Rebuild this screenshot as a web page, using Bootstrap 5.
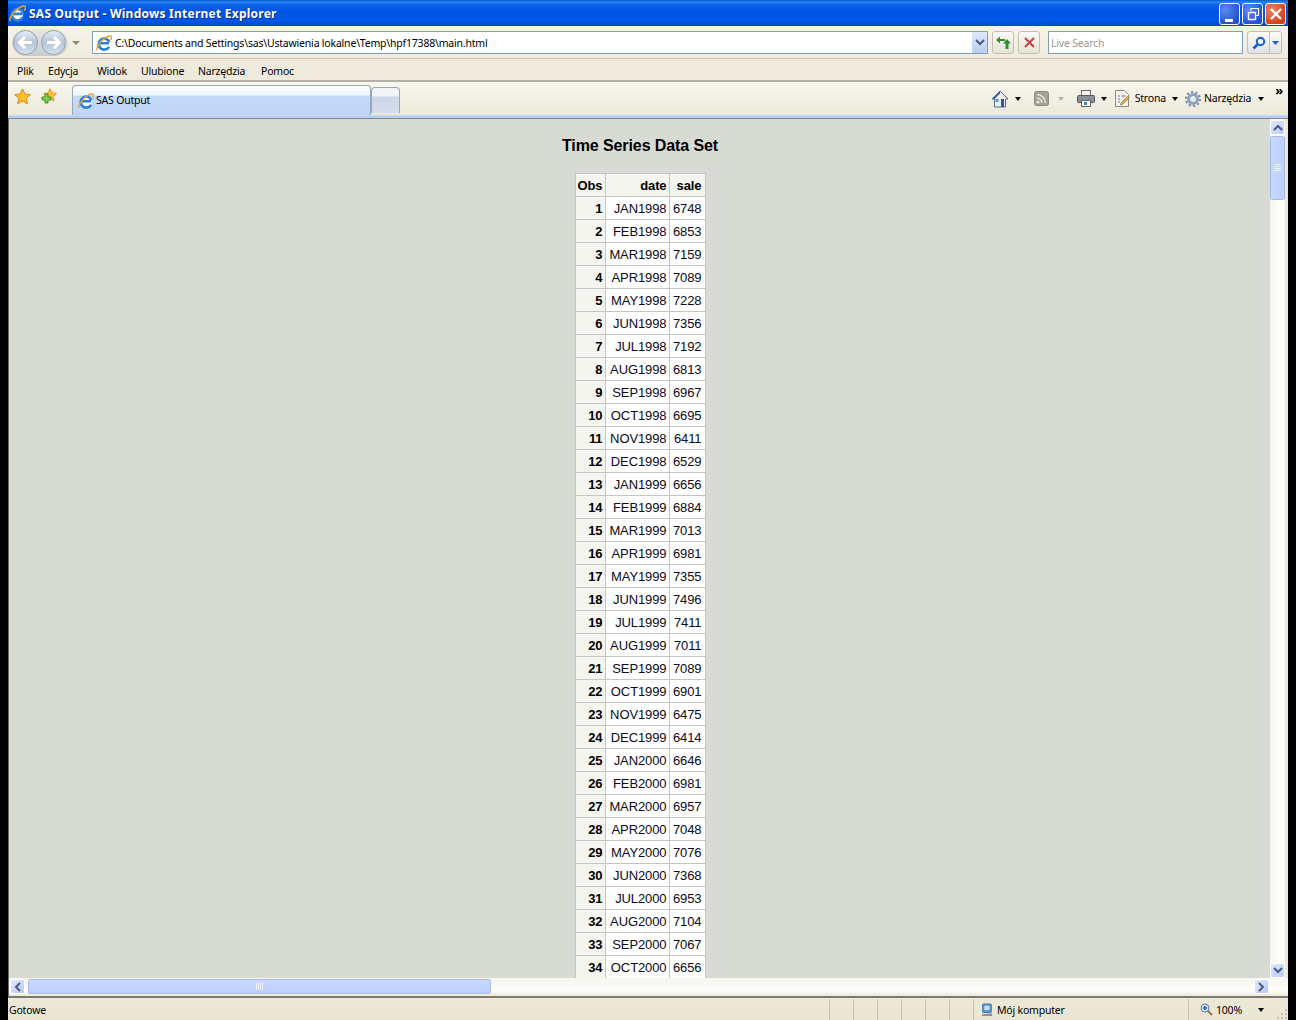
<!DOCTYPE html>
<html lang="pl">
<head>
<meta charset="utf-8">
<title>SAS Output - Windows Internet Explorer</title>
<link href="https://cdn.jsdelivr.net/npm/bootstrap@5.3.0/dist/css/bootstrap.min.css" rel="stylesheet">
<style>
html,body{height:1020px;overflow:hidden;background:#000;}
body{font-family:"Noto Sans","DejaVu Sans",sans-serif;font-size:10.5px;letter-spacing:-.2px;color:#000;}
.flex-none{flex:none;}
.ie-win{width:1280px;height:1020px;margin:0 8px;overflow:hidden;}
.ie-title{height:26px;flex:none;background:linear-gradient(#0a55d8 0,#2a86f6 2px,#0a62ea 5px,#0054e3 12px,#0058e8 20px,#0048d0 26px);padding:1px 2px 0 1px;color:#fff;}
.ie-title-text{font-weight:700;font-size:12px;letter-spacing:.24px;margin-left:3px;text-shadow:1px 1px 0 #0a2a8c;}
.ie-winbtn{width:21px;height:22px;border:1px solid #fff;border-radius:3px;background:radial-gradient(circle at 30% 30%,#5b8cf0,#2250cf 75%);margin-left:2px;}
.ie-winbtn.ie-close{background:radial-gradient(circle at 30% 30%,#ec8560,#d2401a 75%);}
.ie-addr{height:33px;flex:none;background:linear-gradient(#f6f3e8,#efebdc);border-bottom:1px solid #cbc7b6;padding:1px 6px 0 4px;}
.ie-navpill{width:56px;height:27px;border-radius:14px;background:linear-gradient(#e8e8e8,#c8ccd0);}
.ie-field{height:23px;border:1px solid #7f9db9;background:#fff;}
.ie-urlbox{width:896px;margin-left:11px;padding-left:3px;}
.ie-urlicon{flex:none;margin-right:3px;}
.ie-lower{padding-top:2px;}
.ie-combo{width:16px;height:21px;background:linear-gradient(#dfe8fc,#b9cdf6);border-radius:2px;border-left:1px solid #fff;}
.ie-sqbtn{width:22px;height:23px;border:1px solid #c4c0ae;border-radius:3px;background:linear-gradient(#fbfaf5,#e6e3d6);margin-left:4px;}
.ie-search{width:195px;margin-left:8px;padding-left:2px;color:#9a9a90;}
.ie-sbtn{width:35px;height:23px;margin-left:4px;border:1px solid #c4c0ae;border-radius:3px;background:linear-gradient(#fbfaf5,#dfe2e6);}
.ie-sbtn-a{width:22px;border-right:1px solid #c4c0ae;height:100%;}
.ie-menu{height:23px;flex:none;background:#efebdc;border-bottom:2px solid #b4b2a6;padding:4px 0 0 9px;}
.ie-mi31{width:31px;}.ie-mi49{width:49px;}.ie-mi44{width:44px;}.ie-mi57{width:57px;}.ie-mi63{width:63px;}
.ie-tabs{height:33px;flex:none;background:linear-gradient(#f8f6ee,#ece9da);padding-left:6px;}
.ie-stars{gap:9px;padding-bottom:4px;}
.ie-tab{width:299px;height:30px;margin-left:15px;margin-top:3px;border:1px solid #9aa7bb;border-bottom:0;border-radius:4px 4px 0 0;background:linear-gradient(#fcfdff 0,#eff5fe 9px,#c4daf9 10px,#bfd5f7 100%);padding:0 0 0 5px;}
.ie-newtab{width:29px;height:26px;margin-top:5px;border:1px solid #9aa7bb;border-bottom:0;border-radius:4px 4px 0 0;background:linear-gradient(#f2f4f8 0,#f2f4f8 8px,#cdd6ea 9px,#d6ddee 100%);}
.ie-tools{margin-left:auto;padding-right:5px;}
.ie-caret{width:0;height:0;border:3px solid transparent;border-top:4px solid #000;border-bottom:0;display:inline-block;flex:none;}
.ie-caret.ie-off{border-top-color:#b8b6aa;}
.ie-g2{margin-left:2px;}.ie-g3{margin-left:3px;}.ie-g4{margin-left:4px;}.ie-g5{margin-left:5px;}.ie-g6{margin-left:6px;}.ie-g7{margin-left:7px;}.ie-g8{margin-left:8px;}.ie-g9{margin-left:9px;}.ie-g11{margin-left:11px;}.ie-g13{margin-left:13px;}
.ie-more{font-size:13px;line-height:10px;margin-top:3px;}
.ie-blueline{height:3px;flex:none;background:linear-gradient(#c4d8f8,#b4c8ee);}
.ie-main{flex:1;min-height:0;border-top:1px solid #8c8a80;border-left:1px solid #6e6c64;}
.ie-upper{min-height:0;}
.ie-vbar{width:18px;flex:none;background:linear-gradient(90deg,#f6f5ee,#fdfdfa 60%);border-right:3px solid #ece9d8;padding-top:1px;}
.ie-page{background:#d8dbd4;min-height:0;overflow:hidden;padding-left:1px;}
.ie-arrow{width:15px;height:15px;flex:none;border:1px solid #fff;border-radius:2px;background:linear-gradient(135deg,#e0e8fd,#b8cbf8);}
.ie-thumbv{width:15px;height:64px;margin-top:1px;border:1px solid #fff;outline:1px solid #a8bcea;outline-offset:-1px;border-radius:2px;background:linear-gradient(90deg,#c9d8fc,#bcd0fa);}
.ie-hbar{height:18px;flex:none;background:linear-gradient(#f6f5ee,#fdfdfa 70%,#ece9d8);padding:1px 4px 0 1px;}
.ie-thumbh{width:463px;height:15px;margin-left:3px;border:1px solid #fff;outline:1px solid #a8bcea;outline-offset:-1px;border-radius:2px;background:linear-gradient(#c9d8fc,#bcd0fa);}
.ie-corner{width:15px;flex:none;}
.ie-status{height:24px;flex:none;border-top:2px solid #7c7a70;background:linear-gradient(#ece9d8,#e9e6d4);padding-top:1px;}
.ie-status-msg{padding-left:1px;height:100%;line-height:23px;border-right:1px solid #c6c3b2;}
.ie-cell{height:100%;border-right:1px solid #c6c3b2;}
.ie-s1{width:24px;flex:none;}
.ie-s2{width:215px;flex:none;padding-left:7px;}
.ie-s3{width:87px;flex:none;padding-left:11px;padding-right:12px;}
.ie-grip{align-self:flex-end;flex:none;}
h1.ie-h{font-family:"Liberation Sans",Arial,sans-serif;font-size:16px;font-weight:700;letter-spacing:-.1px;line-height:18px;text-align:center;margin:18px 0 18px;color:#000;}
.ie-tbl{font-family:"Liberation Sans",Arial,sans-serif;font-size:13px;letter-spacing:-.1px;line-height:15px;border-collapse:collapse;table-layout:fixed;margin:0 auto;width:131px;color:#000;}
.ie-tbl th,.ie-tbl td{border:1px solid #c4c6c2;padding:4px 2px 3px 0;height:23px;text-align:right;font-weight:400;background:#fff;color:#0a0a20;white-space:nowrap;}
.ie-tbl th{font-weight:700;background:#f4f5ef;color:#000;}
.ie-tbl tr>:last-child{padding-right:3px;}
.ie-c1{width:30px;}.ie-c2{width:64px;}.ie-c3{width:36px;}
</style>
</head>
<body>
<svg width="0" height="0" class="d-block" aria-hidden="true">
<defs>
<symbol id="ie" viewBox="0 0 16 16">
<circle cx="8" cy="8.500" r="5.500" fill="#fff"/>
<path d="M3.500 8.300h9.500M13 11.800A5.500 5.500 0 1 1 13.300 7" fill="none" stroke="#2a7fdc" stroke-width="2.600"/>
<path d="M1.300 15.200C-.6 12.500 6 3 13.500 1c2.600-.7 2.600 2 1 4.200" fill="none" stroke="#eca32a" stroke-width="1.400"/>
</symbol>
<symbol id="star" viewBox="0 0 16 16">
<path d="M8 .8l2.200 4.900 5.200.5-3.900 3.500 1.200 5.200L8 12.200l-4.700 2.700 1.200-5.200L.6 6.200l5.200-.5z" fill="#fbc030" stroke="#d88a10" stroke-width=".9"/>
</symbol>
</defs>
</svg>
<div class="ie-win d-flex flex-column">

  <div class="ie-title d-flex align-items-center">
    <svg width="17" height="17"><use href="#ie"/></svg>
    <span class="ie-title-text">SAS Output - Windows Internet Explorer</span>
    <span class="ms-auto d-flex align-items-center">
      <span class="ie-winbtn d-flex align-items-end justify-content-center"><svg width="12" height="12"><rect x="1" y="7" width="8" height="3" fill="#fff"/></svg></span>
      <span class="ie-winbtn d-flex align-items-center justify-content-center"><svg width="16" height="16" fill="none" stroke="#fff"><rect x="3.500" y="6.500" width="7" height="7" stroke-width="1.400"/><path d="M6 4.500V2.500h7.500v7H11" stroke-width="1.200"/></svg></span>
      <span class="ie-winbtn ie-close d-flex align-items-center justify-content-center"><svg width="14" height="14" stroke="#fff" stroke-width="2.400"><path d="M2 2l10 10M12 2L2 12"/></svg></span>
    </span>
  </div>

  <div class="ie-addr d-flex align-items-center">
    <span class="ie-navpill d-flex align-items-center">
      <svg width="56" height="27" viewBox="0 0 56 27">
        <defs><linearGradient id="gb" x1="0" y1="0" x2="0" y2="1"><stop offset="0" stop-color="#e6eef6"/><stop offset=".5" stop-color="#b4c6d8"/><stop offset="1" stop-color="#d6e2ee"/></linearGradient></defs>
        <circle cx="13.500" cy="13.500" r="12" fill="url(#gb)" stroke="#9aa0a8"/>
        <circle cx="41.500" cy="13.500" r="12" fill="url(#gb)" stroke="#9aa0a8"/>
        <path d="M20 13.500H8M13 8l-5.500 5.500L13 19" fill="none" stroke="#fff" stroke-width="3"/>
        <path d="M35 13.500h12M42 8l5.500 5.500L42 19" fill="none" stroke="#fff" stroke-width="3"/>
      </svg>
    </span>
    <svg class="ms-1" width="9" height="6"><path d="M0 1h8L4 5z" fill="#8a8a84"/></svg>
    <div class="ie-field ie-urlbox d-flex align-items-center">
      <svg class="ie-urlicon" width="16" height="16"><use href="#ie"/></svg>
      <span class="flex-grow-1 ie-lower">C:\Documents and Settings\sas\Ustawienia lokalne\Temp\hpf17388\main.html</span>
      <span class="ie-combo d-flex align-items-center justify-content-center"><svg width="10" height="7" fill="none" stroke="#4a5a80" stroke-width="2"><path d="M1 1l4 4 4-4"/></svg></span>
    </div>
    <span class="ie-sqbtn d-flex align-items-center justify-content-center"><svg width="17" height="15" viewBox="0 0 17 15" fill="#2f8f2f"><path d="M1 5l4-3.500V4h5v2H5v2.500z"/><path d="M12 4l4 4.500h-2.500V14h-3V8.500H8z"/></svg></span>
    <span class="ie-sqbtn d-flex align-items-center justify-content-center"><svg width="13" height="13" stroke="#c8474a" stroke-width="2.200"><path d="M2 2l9 9M11 2L2 11"/></svg></span>
    <div class="ie-field ie-search d-flex align-items-center"><span class="ie-lower">Live Search</span></div>
    <span class="ie-sbtn d-flex align-items-center">
      <span class="ie-sbtn-a d-flex align-items-center justify-content-center"><svg width="14" height="14" fill="none" stroke="#1a5fd0" stroke-width="2"><circle cx="8.500" cy="5.500" r="3.700"/><path d="M5.500 8.500L1.500 12.500" stroke-width="2.600"/></svg></span>
      <span class="flex-grow-1 d-flex justify-content-center"><svg width="7" height="4"><path d="M0 0h7L3.500 4z" fill="#1a5fd0"/></svg></span>
    </span>
  </div>

  <div class="ie-menu d-flex align-items-center">
    <span class="ie-mi31">Plik</span><span class="ie-mi49">Edycja</span><span class="ie-mi44">Widok</span><span class="ie-mi57">Ulubione</span><span class="ie-mi63">Narzędzia</span><span>Pomoc</span>
  </div>

  <div class="ie-tabs d-flex">
    <span class="ie-stars d-flex align-items-center">
      <svg width="17" height="17"><use href="#star"/></svg>
      <svg width="17" height="17" viewBox="0 0 17 17"><g transform="translate(3 0)"><svg width="14" height="14"><use href="#star"/></svg></g><path d="M5 6v3H2v3h3v3h3v-3h3V9H8V6z" fill="#7ed04a" stroke="#3a8a24" stroke-width=".9"/></svg>
    </span>
    <div class="ie-tab d-flex align-items-center">
      <svg class="flex-none" width="16" height="16"><use href="#ie"/></svg><span class="ie-g2">SAS Output</span>
    </div>
    <div class="ie-newtab"></div>
    <div class="ie-tools d-flex align-items-center">
      <svg width="18" height="18" viewBox="0 0 18 18"><path d="M9 1L1 9h2.500v8h11V9H17z" fill="#eef2f6" stroke="#5a6a80"/><path d="M9 1L1 9h2.500L9 3.500z" fill="#3a5ab0"/><rect x="4.500" y="9" width="3" height="3" fill="#5f90c8"/><rect x="10" y="9" width="3" height="8" fill="#2a5aa8"/></svg>
      <span class="ie-caret ie-g6"></span>
      <svg class="ie-g13" width="15" height="15" viewBox="0 0 15 15"><rect x=".5" y=".5" width="14" height="14" rx="2" fill="#a2a298" stroke="#8a8a80"/><circle cx="4" cy="11" r="1.500" fill="#e8e8e0"/><path d="M3 7a5 5 0 0 1 5 5M3 3.500A8.500 8.500 0 0 1 11.500 12" fill="none" stroke="#e8e8e0" stroke-width="1.500"/></svg>
      <span class="ie-caret ie-off ie-g9"></span>
      <svg class="ie-g13" width="18" height="17" viewBox="0 0 18 17"><rect x="4.500" y=".5" width="9" height="5" fill="#f6f6f6" stroke="#666"/><rect x=".5" y="5.500" width="17" height="7" rx="1" fill="#8a8e96" stroke="#55585e"/><rect x="4.500" y="10.500" width="9" height="6" fill="#fff" stroke="#666"/><rect x="7" y="12" width="3" height="3" fill="#3a8ac0"/></svg>
      <span class="ie-caret ie-g6"></span>
      <svg class="ie-g8" width="15" height="17" viewBox="0 0 15 17"><path d="M.5.5h9l4 4v12H.5z" fill="#f6f4ec" stroke="#8a8a84"/><path d="M3 6h2M3 9h2M3 12h2M6.500 6h4" stroke="#5a6a80"/><path d="M6 13l7-7 1.500 1.500-7 7-2 .5z" fill="#e8b040" stroke="#7a6a30" stroke-width=".6"/></svg>
      <span class="ie-g5">Strona</span>
      <span class="ie-caret ie-g6"></span>
      <svg class="ie-g7" width="16" height="16" viewBox="0 0 16 16"><circle cx="8" cy="8" r="4.500" fill="#e4ecf6" stroke="#8ea4bc" stroke-width="3"/><circle cx="8" cy="8" r="7" fill="none" stroke="#7b90a8" stroke-width="2.200" stroke-dasharray="2.200 2.200"/></svg>
      <span class="ie-g3">Narzędzia</span>
      <span class="ie-caret ie-g7"></span>
      <span class="fw-bold ie-g11 align-self-start ie-more">»</span>
    </div>
  </div>

  <div class="ie-blueline"></div>

  <div class="ie-main flex-grow-1 d-flex flex-column">
    <div class="ie-upper d-flex flex-grow-1">
      <div class="ie-page flex-grow-1">
        <h1 class="ie-h">Time Series Data Set</h1>
        <table class="ie-tbl">
          <thead><tr><th class="ie-c1">Obs</th><th class="ie-c2">date</th><th class="ie-c3">sale</th></tr></thead>
          <tbody>
<tr><th>1</th><td>JAN1998</td><td>6748</td></tr>
<tr><th>2</th><td>FEB1998</td><td>6853</td></tr>
<tr><th>3</th><td>MAR1998</td><td>7159</td></tr>
<tr><th>4</th><td>APR1998</td><td>7089</td></tr>
<tr><th>5</th><td>MAY1998</td><td>7228</td></tr>
<tr><th>6</th><td>JUN1998</td><td>7356</td></tr>
<tr><th>7</th><td>JUL1998</td><td>7192</td></tr>
<tr><th>8</th><td>AUG1998</td><td>6813</td></tr>
<tr><th>9</th><td>SEP1998</td><td>6967</td></tr>
<tr><th>10</th><td>OCT1998</td><td>6695</td></tr>
<tr><th>11</th><td>NOV1998</td><td>6411</td></tr>
<tr><th>12</th><td>DEC1998</td><td>6529</td></tr>
<tr><th>13</th><td>JAN1999</td><td>6656</td></tr>
<tr><th>14</th><td>FEB1999</td><td>6884</td></tr>
<tr><th>15</th><td>MAR1999</td><td>7013</td></tr>
<tr><th>16</th><td>APR1999</td><td>6981</td></tr>
<tr><th>17</th><td>MAY1999</td><td>7355</td></tr>
<tr><th>18</th><td>JUN1999</td><td>7496</td></tr>
<tr><th>19</th><td>JUL1999</td><td>7411</td></tr>
<tr><th>20</th><td>AUG1999</td><td>7011</td></tr>
<tr><th>21</th><td>SEP1999</td><td>7089</td></tr>
<tr><th>22</th><td>OCT1999</td><td>6901</td></tr>
<tr><th>23</th><td>NOV1999</td><td>6475</td></tr>
<tr><th>24</th><td>DEC1999</td><td>6414</td></tr>
<tr><th>25</th><td>JAN2000</td><td>6646</td></tr>
<tr><th>26</th><td>FEB2000</td><td>6981</td></tr>
<tr><th>27</th><td>MAR2000</td><td>6957</td></tr>
<tr><th>28</th><td>APR2000</td><td>7048</td></tr>
<tr><th>29</th><td>MAY2000</td><td>7076</td></tr>
<tr><th>30</th><td>JUN2000</td><td>7368</td></tr>
<tr><th>31</th><td>JUL2000</td><td>6953</td></tr>
<tr><th>32</th><td>AUG2000</td><td>7104</td></tr>
<tr><th>33</th><td>SEP2000</td><td>7067</td></tr>
<tr><th>34</th><td>OCT2000</td><td>6656</td></tr>
          </tbody>
        </table>
      </div>
      <div class="ie-vbar d-flex flex-column">
        <span class="ie-arrow d-flex align-items-center justify-content-center"><svg width="10" height="7" fill="none" stroke="#4a5a80" stroke-width="2"><path d="M1 6l4-4 4 4"/></svg></span>
        <span class="ie-thumbv d-flex align-items-center justify-content-center"><svg width="7" height="8" stroke="#eef3ff"><path d="M0 .5h7M0 2.500h7M0 4.500h7M0 6.500h7"/></svg></span>
        <span class="ie-arrow d-flex align-items-center justify-content-center mt-auto"><svg width="10" height="7" fill="none" stroke="#4a5a80" stroke-width="2"><path d="M1 1l4 4 4-4"/></svg></span>
      </div>
    </div>
    <div class="ie-hbar d-flex">
      <span class="ie-arrow d-flex align-items-center justify-content-center"><svg width="7" height="10" fill="none" stroke="#4a5a80" stroke-width="2"><path d="M6 1L2 5l4 4"/></svg></span>
      <span class="ie-thumbh d-flex align-items-center justify-content-center"><svg width="8" height="7" stroke="#eef3ff"><path d="M.5 0v7M2.500 0v7M4.500 0v7M6.500 0v7"/></svg></span>
      <span class="ie-arrow d-flex align-items-center justify-content-center ms-auto"><svg width="7" height="10" fill="none" stroke="#4a5a80" stroke-width="2"><path d="M1 1l4 4-4 4"/></svg></span>
      <span class="ie-corner"></span>
    </div>
  </div>

  <div class="ie-status d-flex align-items-center">
    <span class="flex-grow-1 ie-status-msg">Gotowe</span>
    <span class="ie-cell ie-s1"></span><span class="ie-cell ie-s1"></span><span class="ie-cell ie-s1"></span><span class="ie-cell ie-s1"></span><span class="ie-cell ie-s1"></span><span class="ie-cell ie-s1"></span>
    <span class="ie-cell ie-s2 d-flex align-items-center">
      <svg width="12" height="16" viewBox="0 0 14 16"><rect x="2" y="1" width="10" height="10" rx="1" fill="#5a9ae0" stroke="#3a5a90"/><rect x="4" y="3" width="6" height="5" fill="#bfe0f8"/><path d="M1 13l12-1v3H1z" fill="#8a8ea8"/></svg>
      <span class="ie-g4 ie-lower">Mój komputer</span>
    </span>
    <span class="ie-s3 d-flex align-items-center">
      <svg width="13" height="13" viewBox="0 0 13 13"><circle cx="5" cy="5" r="4" fill="#d8e8fa" stroke="#5a7aa8"/><path d="M3 5h4M5 3v4" stroke="#1a5fd0" stroke-width="1.600"/><path d="M8 8l4 4" stroke="#a07040" stroke-width="2"/></svg>
      <span class="ie-g3 ie-lower">100%</span>
      <span class="ie-caret ms-auto"></span>
    </span>
    <svg class="ie-grip" width="12" height="12" fill="#c4c0ae"><rect x="9" y="1" width="2" height="2"/><rect x="5" y="5" width="2" height="2"/><rect x="9" y="5" width="2" height="2"/><rect x="1" y="9" width="2" height="2"/><rect x="5" y="9" width="2" height="2"/><rect x="9" y="9" width="2" height="2"/></svg>
  </div>
</div>
</body>
</html>
